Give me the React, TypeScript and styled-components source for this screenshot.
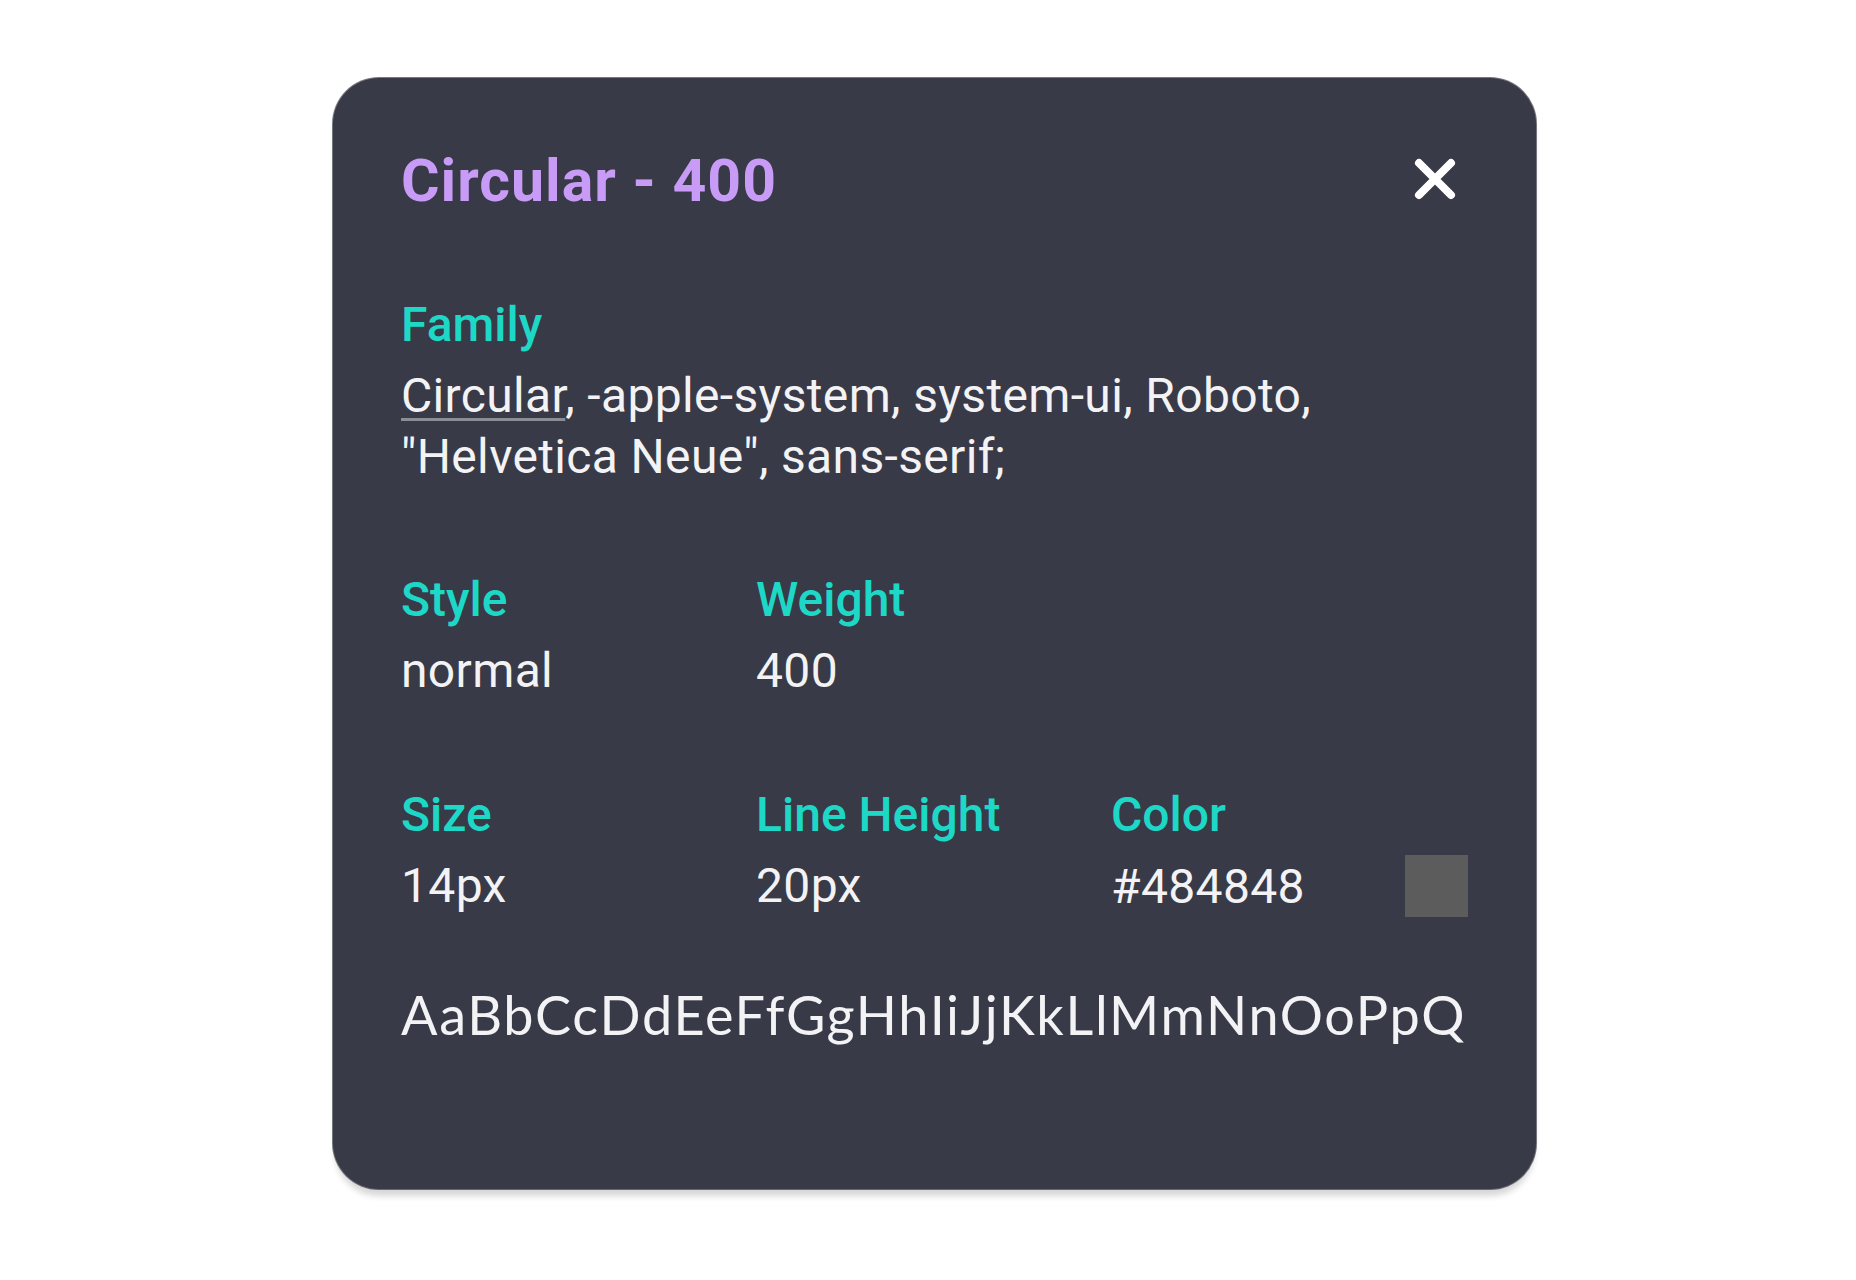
import React from 'react';
import styled, { createGlobalStyle } from 'styled-components';

const GlobalStyle = createGlobalStyle`
  html, body {
    margin: 0;
    padding: 0;
    background: #ffffff;
  }
  * {
    box-sizing: border-box;
  }
`;

const Page = styled.div`
  min-height: 1280px;
  padding: 78px 0 0 333px;
  font-family: Roboto, 'Liberation Sans', Arial, sans-serif;
`;

const Card = styled.section`
  width: 1203px;
  height: 1111px;
  padding: 68px 68px 0 68px;
  background: #393a47;
  border-radius: 46px;
  box-shadow:
    0 0 0 1px rgba(30, 31, 40, 0.6),
    0 9px 6px -2px rgba(0, 0, 0, 0.16);
`;

const Header = styled.header`
  display: flex;
  align-items: center;
  justify-content: space-between;
  height: 70px;
  margin-bottom: 81px;
`;

const Title = styled.h1`
  margin: 0;
  font-size: 59px;
  line-height: 70px;
  font-weight: 700;
  letter-spacing: 1px;
  color: #c89cf6;
`;

const CloseButton = styled.button`
  display: flex;
  align-items: center;
  justify-content: center;
  width: 44px;
  height: 44px;
  margin: -4px 11px 0 0;
  padding: 0;
  border: none;
  background: none;
  cursor: pointer;
`;

const Field = styled.div<{ $gapAfter?: number }>`
  margin-bottom: ${(p) => p.$gapAfter ?? 0}px;
`;

const Label = styled.div`
  font-size: 48px;
  line-height: 56px;
  font-weight: 500;
  color: #1dd8c6;
  margin-bottom: 12px;
`;

const Value = styled.div`
  font-size: 48px;
  line-height: 61px;
  font-weight: 400;
  letter-spacing: 0.35px;
  color: #f3f3f5;
`;

const FontLink = styled.span`
  text-decoration: underline;
  text-decoration-color: #8d8d95;
  text-decoration-thickness: 3px;
  text-underline-offset: 6px;
`;

const Grid = styled.div<{ $gapAfter?: number }>`
  display: grid;
  grid-template-columns: 355px 355px 1fr;
  margin-bottom: ${(p) => p.$gapAfter ?? 0}px;
`;

const ValueRow = styled.div`
  display: flex;
  align-items: center;
  justify-content: space-between;
`;

const Swatch = styled.span<{ $color: string }>`
  display: block;
  width: 63px;
  height: 62px;
  background: ${(p) => p.$color};
`;

const Sample = styled.div`
  font-family: Lato, 'Noto Sans', sans-serif;
  font-size: 54px;
  line-height: 68px;
  font-weight: 400;
  letter-spacing: 1.7px;
  color: #f3f3f5;
  white-space: nowrap;
  margin-top: 5px;
`;

const CloseIcon = () => (
  <svg width="44" height="44" viewBox="0 0 44 44" fill="none">
    <path
      d="M6 6 L38 38 M38 6 L6 38"
      stroke="#ffffff"
      strokeWidth="8"
      strokeLinecap="round"
    />
  </svg>
);

export default function App() {
  return (
    <>
      <GlobalStyle />
      <Page>
        <Card>
          <Header>
            <Title>Circular - 400</Title>
            <CloseButton aria-label="Close">
              <CloseIcon />
            </CloseButton>
          </Header>

          <Field $gapAfter={85}>
            <Label>Family</Label>
            <Value>
              <FontLink>Circular</FontLink>, -apple-system, system-ui, Roboto,
              <br />
              "Helvetica Neue", sans-serif;
            </Value>
          </Field>

          <Grid $gapAfter={86}>
            <Field>
              <Label>Style</Label>
              <Value>normal</Value>
            </Field>
            <Field>
              <Label>Weight</Label>
              <Value>400</Value>
            </Field>
          </Grid>

          <Grid $gapAfter={64}>
            <Field>
              <Label>Size</Label>
              <Value>14px</Value>
            </Field>
            <Field>
              <Label>Line Height</Label>
              <Value>20px</Value>
            </Field>
            <Field>
              <Label>Color</Label>
              <ValueRow>
                <Value>#484848</Value>
                <Swatch $color="#5c5c5c" />
              </ValueRow>
            </Field>
          </Grid>

          <Sample>AaBbCcDdEeFfGgHhIiJjKkLlMmNnOoPpQ</Sample>
        </Card>
      </Page>
    </>
  );
}
